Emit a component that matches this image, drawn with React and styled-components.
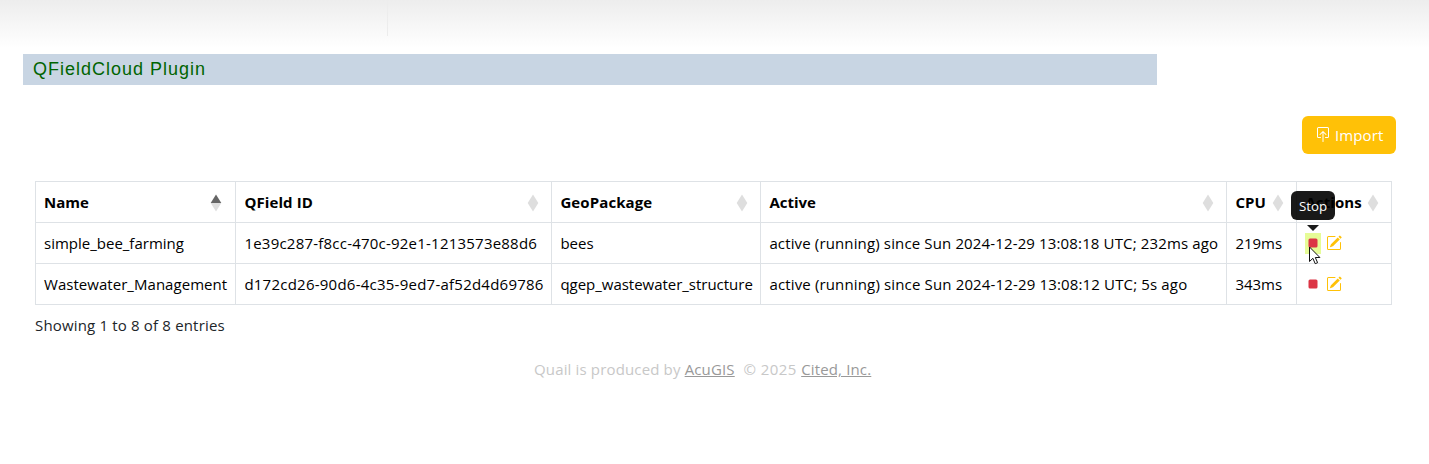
import React from "react";
import styled, { createGlobalStyle } from "styled-components";
import { BsBoxArrowInUp, BsPencilSquare, BsStopFill } from "react-icons/bs";

const GlobalStyle = createGlobalStyle`
  *, *::before, *::after { box-sizing: border-box; }
  body {
    margin: 0;
    background: #fff;
    color: #212529;
    font-family: "Open Sans", "Noto Sans", sans-serif;
    font-size: 15px;
    line-height: 24px;
  }
`;

const Page = styled.div`
  height: 464px;
  overflow: hidden;
`;

const HeaderShade = styled.header`
  height: 54px;
  background: linear-gradient(#ededed, #fff 48px);
`;

const HeaderDivider = styled.div`
  width: 1px;
  height: 36px;
  margin-left: 387px;
  background: linear-gradient(#ededed, #ececec);
`;

const TitleBar = styled.h1`
  width: 1134px;
  height: 31px;
  margin: 0 0 0 23px;
  padding: 0 10px;
  background: #c8d5e3;
  color: #006400;
  font: 400 18px/30px "Liberation Sans", Arial, sans-serif;
  letter-spacing: 1px;
`;

const Toolbar = styled.div`
  display: flex;
  justify-content: flex-end;
  padding: 31px 33px 27px 0;
`;

const ImportButton = styled.button`
  display: flex;
  align-items: center;
  gap: 4px;
  width: 94px;
  height: 38px;
  padding: 0 0 0 13px;
  border: 0;
  border-radius: 6px;
  background: #ffc107;
  color: #fff;
  font: inherit;
`;

const Table = styled.table`
  width: 1357px;
  margin-left: 35px;
  table-layout: fixed;
  border-collapse: separate;
  border-spacing: 0;
  border-top: 1px solid #dee2e6;
  border-left: 1px solid #dee2e6;
  color: #000;
`;

const Col = styled.col`
  width: ${(p) => p.$width}px;
`;

const HeadCell = styled.th`
  height: 41px;
  padding: 0 12px 0 8.4px;
  border-right: 1px solid #dee2e6;
  border-bottom: 1px solid #dee2e6;
  text-align: left;
  font-weight: 700;
  &:first-child { padding: 0 13px 0 8px; }
`;

const HeadContent = styled.div`
  display: flex;
  align-items: center;
  justify-content: space-between;
`;

const Cell = styled.td`
  height: 41px;
  padding: 0 0 0 8.4px;
  border-right: 1px solid #dee2e6;
  border-bottom: 1px solid #dee2e6;
  white-space: nowrap;
  &:first-child { padding-left: 8px; }
`;

const Label = styled.span`
  white-space: pre;
  letter-spacing: ${(p) => p.$track || 0}px;
`;

const SortMark = styled.svg`
  display: block;
  flex: none;
  width: 12px;
  height: 18px;
  margin-top: 1px;
`;

const Actions = styled.div`
  display: flex;
  align-items: center;
  gap: 4.5px;
  margin-left: -0.4px;
`;

const StopLink = styled.a`
  position: relative;
  display: flex;
  align-items: center;
  width: 16px;
  height: 21px;
  color: #dc3545;
  background: ${(p) => (p.$hover ? "#e6fc97" : "transparent")};
`;

const EditLink = styled.a`
  display: flex;
  color: #ffc107;
`;

const Tooltip = styled.div`
  position: absolute;
  left: -14px;
  top: -42px;
  width: 44px;
  height: 29px;
  border-radius: 6px;
  background: rgba(0, 0, 0, 0.9);
  color: #fff;
  font-size: 13.3px;
  line-height: 30px;
  text-align: center;
  &::after {
    content: "";
    position: absolute;
    left: 16px;
    top: 34px;
    border: 6px solid transparent;
    border-top-color: #1a1a1a;
    border-bottom: 0;
  }
`;

const Pointer = styled.svg`
  position: absolute;
  left: 4px;
  top: 13px;
  width: 13px;
  height: 20px;
  z-index: 2;
`;

const Info = styled.div`
  margin: 8px 0 0 35px;
`;

const Footer = styled.footer`
  display: flex;
  margin: 20px 0 0 534px;
  color: #c8c8c8;
  letter-spacing: 0.15px;
`;

const FooterText = styled.span`
  white-space: pre;
  letter-spacing: ${(p) => p.$track}px;
`;

const FooterLink = styled.a`
  color: #999;
  text-decoration: underline;
`;

const columns = [
  { title: "Name", width: 200, sorted: true },
  { title: "QField ID", width: 316, track: 0.1 },
  { title: "GeoPackage", width: 209, track: 0.1 },
  { title: "Active", width: 466 },
  { title: "CPU", width: 70, track: 0.1 },
  { title: "Actions", width: 95, track: 0.1 },
];

const rows = [
  {
    hover: true,
    cells: [
      ["simple_bee_farming", 0],
      ["1e39c287-f8cc-470c-92e1-1213573e88d6", 0.22],
      ["bees", 0],
      ["active (running) since Sun 2024-12-29 13:08:18 UTC; 232ms ago", 0.14],
      ["219ms", 0],
    ],
  },
  {
    cells: [
      ["Wastewater_Management", 0.04],
      ["d172cd26-90d6-4c35-9ed7-af52d4d69786", 0.24],
      ["qgep_wastewater_structure", -0.02],
      ["active (running) since Sun 2024-12-29 13:08:12 UTC; 5s ago", 0.15],
      ["343ms", 0],
    ],
  },
];

function SortIcon({ sorted }) {
  return (
    <SortMark viewBox="0 0 12 18">
      <path d="M6 0.5 11.3 9H.7Z" fill={sorted ? "#666" : "#dedede"} />
      <path d="M.7 9h10.6L6 17.5Z" fill="#dedede" />
    </SortMark>
  );
}

function Cursor() {
  return (
    <Pointer viewBox="0 0 13 20">
      <path
        d="M.5 1v14.5l3.4-3.2 2.3 5.4 2.4-1-2.3-5.2h4.6Z"
        fill="#fff"
        stroke="#111"
        strokeWidth="1"
      />
    </Pointer>
  );
}

export default function App() {
  return (
    <Page>
      <GlobalStyle />
      <HeaderShade>
        <HeaderDivider />
      </HeaderShade>
      <TitleBar>QFieldCloud Plugin</TitleBar>
      <Toolbar>
        <ImportButton>
          <BsBoxArrowInUp size={16} />
          <Label $track={0.1}>Import</Label>
        </ImportButton>
      </Toolbar>
      <Table>
        <colgroup>
          {columns.map((c) => (
            <Col key={c.title} $width={c.width} />
          ))}
        </colgroup>
        <thead>
          <tr>
            {columns.map((c) => (
              <HeadCell key={c.title}>
                <HeadContent>
                  <Label $track={c.track}>{c.title}</Label>
                  <SortIcon sorted={c.sorted} />
                </HeadContent>
              </HeadCell>
            ))}
          </tr>
        </thead>
        <tbody>
          {rows.map((row) => (
            <tr key={row.cells[0][0]}>
              {row.cells.map(([text, track]) => (
                <Cell key={text}>
                  <Label $track={track}>{text}</Label>
                </Cell>
              ))}
              <Cell>
                <Actions>
                  <StopLink $hover={row.hover}>
                    <BsStopFill size={16} />
                    {row.hover && <Tooltip>Stop</Tooltip>}
                    {row.hover && <Cursor />}
                  </StopLink>
                  <EditLink>
                    <BsPencilSquare size={16} />
                  </EditLink>
                </Actions>
              </Cell>
            </tr>
          ))}
        </tbody>
      </Table>
      <Info>
        <Label $track={0.17}>Showing 1 to 8 of 8 entries</Label>
      </Info>
      <Footer>
        <FooterText $track={0.15}>{"Quail is produced by "}</FooterText>
        <FooterLink>AcuGIS</FooterLink>
        <FooterText $track={0.45}>{"  © 2025 "}</FooterText>
        <FooterLink>Cited, Inc.</FooterLink>
      </Footer>
    </Page>
  );
}
